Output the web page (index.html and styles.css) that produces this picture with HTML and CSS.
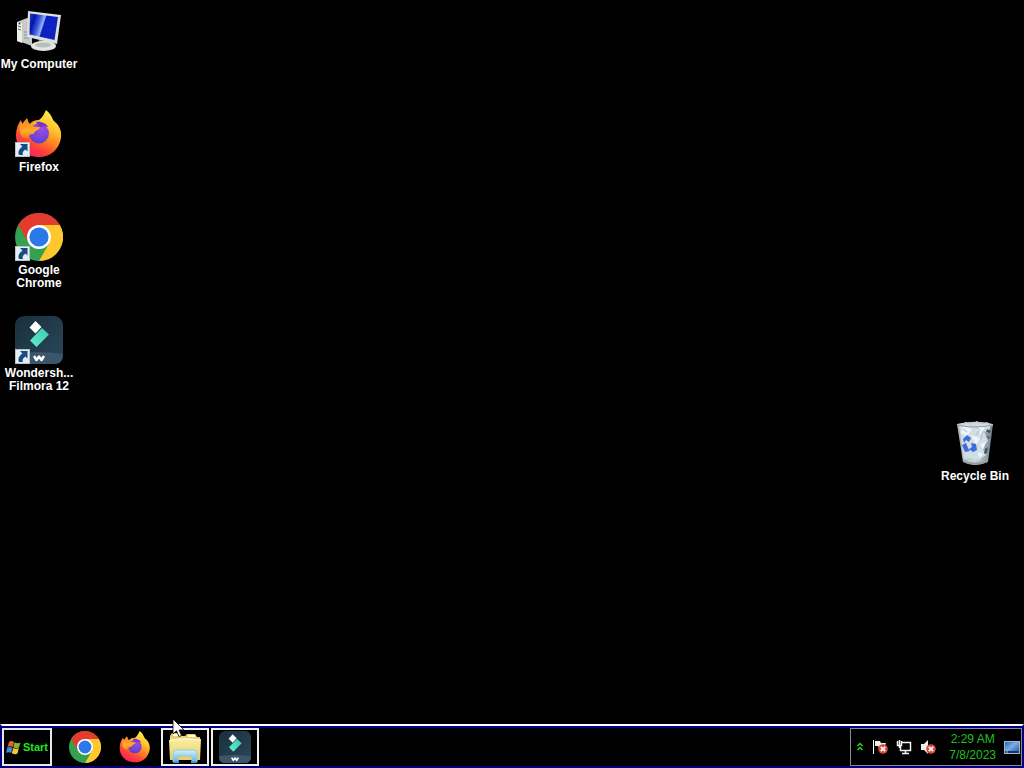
FILE: index.html
```html
<!DOCTYPE html>
<html lang="en">
<head>
<meta charset="utf-8">
<meta name="viewport" content="width=device-width, initial-scale=1">
<title>Desktop</title>
<link rel="stylesheet" href="styles.css">
</head>
<body>
<svg class="defs" aria-hidden="true">
  <defs>
    <linearGradient id="screen" x1="0" y1="0" x2="1" y2=".3"><stop offset="0" stop-color="#2449b8"/><stop offset=".2" stop-color="#0714a8"/><stop offset=".38" stop-color="#3659dc"/><stop offset=".54" stop-color="#9db2f6"/><stop offset=".58" stop-color="#0c20c4"/><stop offset="1" stop-color="#1023be"/></linearGradient>
    <linearGradient id="fox" x1=".8" y1="0" x2=".25" y2="1"><stop offset="0" stop-color="#fff44f"/><stop offset=".3" stop-color="#ffc52e"/><stop offset=".52" stop-color="#ff8a22"/><stop offset=".75" stop-color="#ff4238"/><stop offset="1" stop-color="#f01e68"/></linearGradient>
    <radialGradient id="globe" cx=".6" cy=".2" r=".9"><stop offset="0" stop-color="#a34be0"/><stop offset=".6" stop-color="#7545d8"/><stop offset="1" stop-color="#4c3fc0"/></radialGradient>
    <linearGradient id="foxhead" x1="0" y1="0" x2="0" y2="1"><stop offset="0" stop-color="#ff7a24"/><stop offset=".6" stop-color="#ffae26"/><stop offset="1" stop-color="#ff7a2c"/></linearGradient>
    <linearGradient id="filmora" x1="0" y1="0" x2="1" y2="1"><stop offset="0" stop-color="#18303d"/><stop offset="1" stop-color="#2b4759"/></linearGradient>
    <linearGradient id="mint" x1="0" y1="1" x2="1" y2="0"><stop offset="0" stop-color="#62efd0"/><stop offset="1" stop-color="#3cc8ac"/></linearGradient>
    <linearGradient id="bin" x1="0" x2="1"><stop offset="0" stop-color="#a3b0b8"/><stop offset=".5" stop-color="#cbd8df"/><stop offset="1" stop-color="#6f808b"/></linearGradient>
    <linearGradient id="folder" x1="0" y1="0" x2="0" y2="1"><stop offset="0" stop-color="#faf0a8"/><stop offset="1" stop-color="#e8cc62"/></linearGradient>
    <linearGradient id="stand" x1="0" y1="0" x2="0" y2="1"><stop offset="0" stop-color="#d4f1fa"/><stop offset="1" stop-color="#64b4df"/></linearGradient>
    <linearGradient id="peek" x1="0" y1="0" x2="1" y2="1"><stop offset="0" stop-color="#245bae"/><stop offset=".45" stop-color="#79aee8"/><stop offset="1" stop-color="#1b4596"/></linearGradient>
  </defs>
  <symbol id="chrome" viewBox="0 0 48 48">
    <circle cx="24" cy="24" r="24" fill="#34a151"/>
    <path d="M24 24 L24 12 H44.8 A24 24 0 0 1 24 48 L34.4 30Z" fill="#fdc72d"/>
    <path d="M3.2 12 A24 24 0 0 1 44.8 12 H24 L13.6 30Z" fill="#e33b2e"/>
    <circle cx="24" cy="24" r="12" fill="#fff"/>
    <circle cx="24" cy="24" r="9.6" fill="#2b78ea"/>
  </symbol>
  <symbol id="firefox" viewBox="0 0 48 48">
    <path d="M31 0 C35 3 37 7 38 10 C44 15 47 20 46 28 C44 40 35 47 24 47 C10 47 1 37 1 25 C1 19 3 14 6 10 L7 14 L12 8 C13 11 13 13 15 14 C17 11 20 10 24 10 C28 7 29 4 31 0Z" fill="url(#fox)"/>
    <circle cx="24" cy="23.500" r="10" fill="url(#globe)"/>
    <path d="M21 12 C26 11 32 14 33 17 C29 16 28 17 24 17Z" fill="#7b35c6"/>
    <path d="M6 11 L8 15 C9 13 11 11 12 9 C13 12 14 14 17 15 C19 17 21 17 25 17 C25 20 20 20 19 23 C19 25 15 23 14 26 C10 32 2 26 6 11Z" fill="url(#foxhead)"/>
  </symbol>
  <symbol id="film" viewBox="0 0 48 48">
    <rect width="48" height="48" rx="9" fill="url(#filmora)"/>
    <path d="M0 38 Q24 34 48 38 V39 Q48 48 39 48 H9 Q0 48 0 39Z" fill="#3b5569"/>
    <path d="M20.500 5 L26.500 11 L20.500 17.500 L14.500 11.500Z" fill="#fff"/>
    <path d="M27 12 L34 18.500 L21.500 31 L15 24.500Z" fill="url(#mint)"/>
    <path d="M19 40 L21.500 44 L24 40.500 L26.500 44 L29 40" fill="none" stroke="#fff" stroke-width="2.500" stroke-linejoin="round"/>
  </symbol>
  <symbol id="shortcut" viewBox="0 0 15 15">
    <rect x=".5" y=".5" width="14" height="14" fill="#e6edf3" stroke="#b4c2cc"/>
    <path d="M5 2 H12.500 V9.500 L10.500 7.500 C8 9 7 11 8 13 H4 C2.500 9.500 4.500 6.500 7.500 4.500Z" fill="#174b83"/>
  </symbol>
  <symbol id="error" viewBox="0 0 10 10">
    <circle cx="5" cy="5" r="4.800" fill="#d9483a"/>
    <path d="M2.800 2.800 L7.200 7.200 M7.200 2.800 L2.800 7.200" stroke="#fff" stroke-width="1.800"/>
  </symbol>
</svg>

<main class="desktop">
  <button class="shortcut" type="button">
    <svg class="shortcut-icon" viewBox="0 0 48 48" aria-hidden="true">
      <path d="M2 15 L12 11 L17 13 V39 L9 36 L2 34Z" fill="#c7cac8"/>
      <path d="M2 15 L7 16 V36 L2 34Z" fill="#eceeea"/>
      <path d="M3 19 L6 20 M3 22 L6 23" stroke="#666" />
      <circle cx="4.500" cy="16.500" r="1" fill="#333"/>
      <path d="M9 25 H14 M9 28 H14 M9 31 H14" stroke="#8f9390"/>
      <path d="M24 33 L32 34 V39 H25Z" fill="#a4aaa8"/>
      <ellipse cx="28.500" cy="39" rx="12.500" ry="5" fill="#e2e5e1"/>
      <ellipse cx="28" cy="38" rx="8" ry="2.500" fill="#b8bdbc"/>
      <path d="M13 4 L46 8 L42 37 L12 30Z" fill="#dce1df"/>
      <path d="M15 6.500 L43 10 L39.500 33 L14.500 27.500Z" fill="url(#screen)"/>
    </svg>
    <span class="shortcut-label">My Computer</span>
  </button>
  <button class="shortcut" type="button">
    <svg class="shortcut-icon" viewBox="0 0 48 48" aria-hidden="true"><use href="#firefox"/><use href="#shortcut" y="32" width="15" height="15"/></svg>
    <span class="shortcut-label">Firefox</span>
  </button>
  <button class="shortcut" type="button">
    <svg class="shortcut-icon" viewBox="0 0 48 48" aria-hidden="true"><use href="#chrome"/><use href="#shortcut" y="33" width="15" height="15"/></svg>
    <span class="shortcut-label">Google<br>Chrome</span>
  </button>
  <button class="shortcut" type="button">
    <svg class="shortcut-icon" viewBox="0 0 48 48" aria-hidden="true"><use href="#film"/><use href="#shortcut" y="33" width="15" height="15"/></svg>
    <span class="shortcut-label">Wondersh...<br>Filmora 12</span>
  </button>
  <button class="shortcut recycle-bin" type="button">
    <svg class="shortcut-icon" viewBox="0 0 48 48" aria-hidden="true">
      <path d="M6 5 Q24 1 42 5 L37 43 Q24 49 12 43Z" fill="url(#bin)"/>
      <path d="M8 6 L15 3 L20 6 L26 2 L31 5 L36 3 L40 6 L37 14 L33 12 L37 22 L31 29 L35 36 L28 41 L19 39 L13 40Z" fill="#cfdde5"/>
      <path d="M12 7 L21 10 L16 18 L10 14Z M25 8 L34 7 L30 16Z M20 16 L29 19 L25 26Z M29 25 L35 23 L32 31Z M27 33 L33 35 L28 39Z" fill="#eef4f7"/>
      <path d="M24 7 L29 11 L25 16 M32 12 L30 20 M12 10 L16 13" fill="none" stroke="#a9bbc6"/>
      <path d="M36 10 L40 12 L39 14 L35 13Z M35 17 L39 18 L38 20Z M34 30 L37 28 L36 34 L33 35Z" fill="#46535b"/>
      <path d="M12 20 L16 16 L20 19 L18 23 L15 21 L13 24Z M20 24 L25 25 L26 31 L22 33 L18 30 L21 28Z M11 26 L15 24 L17 29 L19 32 L14 33Z" fill="#3f6bdc"/>
      <path d="M12 41 Q24 46 37 41 L36.500 43 Q24 49 12.500 43Z" fill="#969da0"/>
      <path d="M6 6 Q24 1 42 6" fill="none" stroke="#c9d0d3" stroke-width="1.500"/>
      <path d="M6 6 Q24 10 42 6" fill="none" stroke="#8e9ca4"/>
    </svg>
    <span class="shortcut-label">Recycle Bin</span>
  </button>
</main>

<footer class="taskbar">
  <button class="start" type="button">
    <svg class="start-flag" viewBox="0 0 15 15" aria-hidden="true">
      <path d="M3 2 Q5.500 0 8 2 L6.800 7 Q4 5.500 1.500 7Z" fill="#e8612c"/>
      <path d="M8.500 2.300 Q11.500 4 14.500 2.500 L13 7.500 Q10.500 9 7.300 7.300Z" fill="#7fba37"/>
      <path d="M1.300 7.600 Q4 6.200 6.500 7.600 L5.300 13 Q2.500 11.500 0 13Z" fill="#3d87dc"/>
      <path d="M7.100 8 Q10 9.600 12.800 8.100 L11.500 13.500 Q9 15 5.900 13.200Z" fill="#f7c52f"/>
    </svg>
    <span>Start</span>
  </button>
  <nav class="tasks" aria-label="Applications">
    <button class="task" type="button" aria-label="Google Chrome"><svg class="task-icon" viewBox="0 0 48 48"><use href="#chrome"/></svg></button>
    <button class="task" type="button" aria-label="Firefox"><svg class="task-icon" viewBox="0 0 48 48"><use href="#firefox"/></svg></button>
    <button class="task task-open" type="button" aria-label="File Explorer">
      <svg class="task-icon" viewBox="0 0 32 32">
        <path d="M1 5 L3 2 H11 L13 5 H16 L18 3 H26 L28 6 H31 V25 H1Z" fill="#e6cf78"/>
        <path d="M4 4 H10 M19 5 H26" stroke="#fff9d3" stroke-width="2"/>
        <path d="M0 9 L14 7 L32 8 L31 29 H1Z" fill="url(#folder)"/>
        <path d="M1 9 L15 8 L31 9" fill="none" stroke="#fffbd6"/>
        <path d="M4 31 V22 Q4 19 8 19 H24 Q28 19 28 22 V31 H23 V25 H9 V31Z" fill="url(#stand)" stroke="#8fcbe6"/>
        <path d="M5 31 H10 M22 31 H27" stroke="#4b98ce" stroke-width="2"/>
      </svg>
    </button>
    <button class="task task-open" type="button" aria-label="Wondershare Filmora 12"><svg class="task-icon" viewBox="0 0 48 48"><use href="#film"/></svg></button>
  </nav>
  <section class="tray" aria-label="Notification area">
    <button class="tray-button" type="button" aria-label="Show hidden icons">
      <svg class="tray-chevron" viewBox="0 0 8 10"><path d="M1.500 4 L4 1.500 L6.500 4 M1.500 8 L4 5.500 L6.500 8" fill="none" stroke="#22d622" stroke-width="1.500"/></svg>
    </button>
    <button class="tray-button" type="button" aria-label="Action Center">
      <svg class="tray-icon" viewBox="0 0 16 16"><path d="M1.500 1 V15" stroke="#fff"/><path d="M3 2 H8 L9 4 H14 L12 9 H7 L6 7 H3Z" fill="#eee"/><use href="#error" x="6" y="5" width="10" height="10"/></svg>
    </button>
    <button class="tray-button" type="button" aria-label="Network">
      <svg class="tray-icon" viewBox="0 0 16 16"><path d="M6 3.500 H14.500 V11.500 H4.500 V7 M9.500 12 V14.500 M6 14.500 H13 M1.500 2 V6.500 H5.500 V2 M3.500 1 V9" fill="none" stroke="#f4f4f4" stroke-width="1.500"/></svg>
    </button>
    <button class="tray-button" type="button" aria-label="Volume muted">
      <svg class="tray-icon" viewBox="0 0 16 16"><path d="M1 5 H4 L8 1 V15 L4 11 H1Z" fill="#eee"/><use href="#error" x="6" y="5" width="10" height="10"/></svg>
    </button>
    <time class="clock" datetime="2023-07-08T02:29">2:29 AM<br>7/8/2023</time>
    <button class="tray-button" type="button" aria-label="Show desktop">
      <svg class="tray-icon" viewBox="0 0 16 16"><rect x=".5" y="2.500" width="15" height="12" fill="url(#peek)" stroke="#9fb6d0"/><path d="M1 13 H15" stroke="#17336e" stroke-width="2"/><path d="M2 13 H4" stroke="#a8df74"/></svg>
    </button>
  </section>
</footer>
<svg class="cursor" viewBox="0 0 13 20" aria-hidden="true"><path d="M1 1 V16 L4.500 12.800 L7 18.500 L9.500 17.500 L7 12 H12Z" fill="#fff" stroke="#000" stroke-width=".8"/></svg>
</body>
</html>
```

FILE: styles.css
```css
* {
  box-sizing: border-box;
}

body {
  margin: 0;
  min-height: 100vh;
  display: flex;
  flex-direction: column;
  background: #000;
  color: #fff;
  font-family: "Liberation Sans", Arial, sans-serif;
  font-size: 12px;
  overflow: hidden;
}

button {
  margin: 0;
  padding: 0;
  border: 0;
  background: none;
  color: inherit;
  font: inherit;
}

svg {
  display: block;
}

.defs {
  position: absolute;
  width: 0;
  height: 0;
}

.desktop {
  flex: 1;
  position: relative;
  display: flex;
  flex-direction: column;
  align-items: flex-start;
  gap: 4px;
  padding-top: 7px;
}

.shortcut {
  display: flex;
  flex-direction: column;
  align-items: center;
  gap: 3px;
  width: 78px;
  min-height: 99px;
}

.shortcut-icon {
  width: 48px;
  height: 48px;
}

.shortcut-label {
  font-family: "Liberation Sans", Arial, sans-serif;
  font-size: 12px;
  font-weight: 700;
  line-height: 13px;
  white-space: nowrap;
}

.recycle-bin {
  position: absolute;
  top: 419px;
  right: 10px;
}

.taskbar {
  display: flex;
  align-items: stretch;
  height: 44px;
  border: 2px solid #000080;
  border-top-color: #fff;
  box-shadow: inset 0 2px #000090;
  padding-top: 2px;
}

.start {
  display: flex;
  align-items: center;
  justify-content: center;
  gap: 2px;
  width: 50px;
  border: 2px solid #e8e8e8;
  color: #22e622;
  font-family: "Liberation Sans", Arial, sans-serif;
  font-size: 11px;
  font-weight: 700;
}

.start-flag {
  width: 15px;
  height: 15px;
}

.tasks {
  display: flex;
  gap: 2px;
  margin-left: 9px;
}

.task {
  display: grid;
  place-items: center;
  width: 48px;
}

.task-open {
  border: 2px solid #f0f0f0;
}

.task-icon {
  width: 32px;
  height: 32px;
}

.tray {
  display: flex;
  align-items: center;
  gap: 8px;
  margin-left: auto;
  padding: 0 1px 0 5px;
  border: 1px solid #8c8c8c;
}

.tray-chevron {
  width: 8px;
  height: 10px;
}

.tray-icon {
  width: 16px;
  height: 16px;
}

.clock {
  padding-left: 5px;
  color: #20c020;
  font-family: "Liberation Sans", Arial, sans-serif;
  font-size: 12px;
  line-height: 16px;
  text-align: center;
}

.cursor {
  position: absolute;
  left: 172px;
  top: 718px;
  width: 13px;
  height: 20px;
  pointer-events: none;
}
```
